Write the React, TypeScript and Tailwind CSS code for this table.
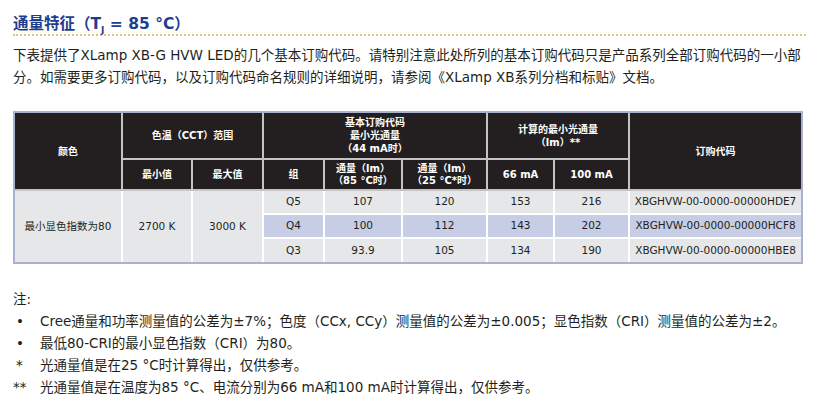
import React from "react";

const font = { fontFamily: '"DejaVu Sans", "Noto Sans CJK SC", sans-serif' };

const H = "bg-[#231f20] text-white font-bold text-[10px] leading-[13px] text-center align-middle border-2 border-[#c4c4c4]";
const D = "text-[#231f20] text-[10.5px] text-center align-middle border-2 border-white";

const rows = [
  { g: "Q5", a: "107", b: "120", c: "153", d: "216", code: "XBGHVW-00-0000-00000HDE7", hl: false },
  { g: "Q4", a: "100", b: "112", c: "143", d: "202", code: "XBGHVW-00-0000-00000HCF8", hl: true },
  { g: "Q3", a: "93.9", b: "105", c: "134", d: "190", code: "XBGHVW-00-0000-00000HBE8", hl: false },
];

export default function App() {
  return (
    <div className="w-[819px] h-[405px] bg-white px-[13px] text-[#231f20]" style={font}>
      <div className="pt-[14px] border-b-2 border-dotted border-[#e2c572]">
        <div className="text-[15.5px] leading-[20px] font-bold text-[#1d3d8f]">
          通量特征（T<sub className="text-[9px] align-baseline relative top-[4px]">J</sub> = 85 °C）
        </div>
      </div>
      <div className="mt-[8px] text-[13.5px] leading-[22px]">
        <div className="whitespace-nowrap">
          下表提供了XLamp XB-G HVW LED的几个基本订购代码。请特别注意此处所列的基本订购代码只是产品系列全部订购代码的一小部
        </div>
        <div className="whitespace-nowrap">
          分。如需要更多订购代码，以及订购代码命名规则的详细说明，请参阅《XLamp XB系列分档和标贴》文档。
        </div>
      </div>
      <div className="mt-[23px] w-[790px] border-2 border-[#a9b2d0]">
        <table className="w-[786px] table-fixed border-collapse border-hidden">
          <colgroup>
            <col className="w-[107px]" />
            <col className="w-[70px]" />
            <col className="w-[71px]" />
            <col className="w-[61px]" />
            <col className="w-[78px]" />
            <col className="w-[85px]" />
            <col className="w-[67px]" />
            <col className="w-[75px]" />
            <col className="w-[172px]" />
          </colgroup>
          <thead>
            <tr className="h-[46px]">
              <th rowSpan={2} className={H}>颜色</th>
              <th colSpan={2} className={H}>色温（CCT）范围</th>
              <th colSpan={3} className={H}>
                基本订购代码<br />最小光通量<br />（44 mA时）
              </th>
              <th colSpan={2} className={H}>
                计算的最小光通量<br />（lm）**
              </th>
              <th rowSpan={2} className={H}>订购代码</th>
            </tr>
            <tr className="h-[31px]">
              <th className={H}>最小值</th>
              <th className={H}>最大值</th>
              <th className={H}>组</th>
              <th className={H + " !leading-[12px]"}>通量（lm）<br />（85 °C时）</th>
              <th className={H + " !leading-[12px]"}>通量（lm）<br />（25 °C*时）</th>
              <th className={H}>66 mA</th>
              <th className={H}>100 mA</th>
            </tr>
          </thead>
          <tbody>
            {rows.map((r, i) => {
              const bg = r.hl ? "bg-[#c6cde5]" : "bg-[#e6e7e8]";
              return (
                <tr key={r.g} className="h-[24px]">
                  {i === 0 && (
                    <>
                      <td rowSpan={3} className={D + " bg-[#e6e7e8]"}>最小显色指数为80</td>
                      <td rowSpan={3} className={D + " bg-[#e6e7e8]"}>2700 K</td>
                      <td rowSpan={3} className={D + " bg-[#e6e7e8]"}>3000 K</td>
                    </>
                  )}
                  <td className={D + " " + bg}>{r.g}</td>
                  <td className={D + " " + bg}>{r.a}</td>
                  <td className={D + " " + bg}>{r.b}</td>
                  <td className={D + " " + bg}>{r.c}</td>
                  <td className={D + " " + bg}>{r.d}</td>
                  <td className={D + " " + bg}>{r.code}</td>
                </tr>
              );
            })}
          </tbody>
        </table>
      </div>
      <div className="mt-[24px] text-[13.5px] leading-[22px]">
        <div>注:</div>
        <div className="flex">
          <span className="w-[27px] pl-[3px]">•</span>
          <span className="whitespace-nowrap">Cree通量和功率测量值的公差为±7%；色度（CCx, CCy）测量值的公差为±0.005；显色指数（CRI）测量值的公差为±2。</span>
        </div>
        <div className="flex">
          <span className="w-[27px] pl-[3px]">•</span>
          <span className="whitespace-nowrap">最低80-CRI的最小显色指数（CRI）为80。</span>
        </div>
        <div className="flex">
          <span className="w-[27px] pl-[3px]">*</span>
          <span className="whitespace-nowrap">光通量值是在25 °C时计算得出，仅供参考。</span>
        </div>
        <div className="flex">
          <span className="w-[27px]">**</span>
          <span className="whitespace-nowrap">光通量值是在温度为85 °C、电流分别为66 mA和100 mA时计算得出，仅供参考。</span>
        </div>
      </div>
    </div>
  );
}
